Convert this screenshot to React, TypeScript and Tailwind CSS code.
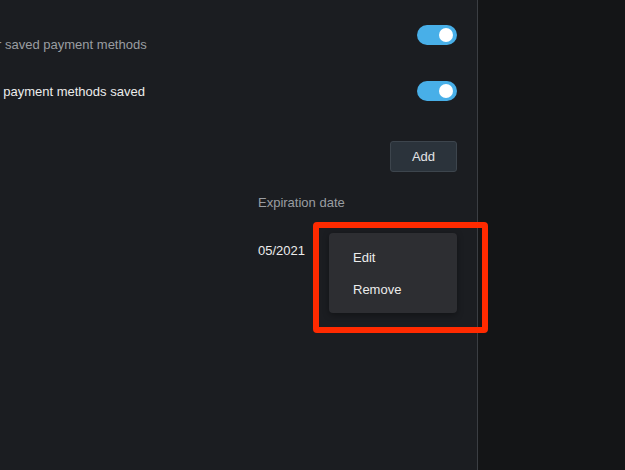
import React from "react";

function Toggle() {
  return (
    <div className="relative h-[20px] w-[40px] shrink-0 rounded-full bg-[#48afe8]">
      <div className="absolute right-[4px] top-[3px] h-[14px] w-[14px] rounded-full bg-white" />
    </div>
  );
}

export default function App() {
  return (
    <div
      className="flex h-[470px] w-[625px] overflow-hidden bg-[#141517] text-[13px] leading-[15px]"
      style={{ fontFamily: '"Liberation Sans", Arial, sans-serif' }}
    >
      <div className="relative flex w-[478px] shrink-0 flex-col border-r border-[#3b3e43] bg-[#1b1d21] pr-[20px] pt-[25px]">
        <div className="flex items-start justify-between">
          <span className="mt-[12px] ml-[-60px] whitespace-nowrap text-[#9a9da2]">
            Show your saved payment methods
          </span>
          <Toggle />
        </div>
        <div className="mt-[29px] flex items-center justify-between">
          <span className="ml-[-17px] whitespace-nowrap text-[#ececec]">
            No payment methods saved
          </span>
          <Toggle />
        </div>
        <div className="mt-[40px] flex justify-end">
          <button className="h-[31px] w-[67px] rounded-[3px] border border-[#3d454d] bg-[#2b333b] text-[13px] text-[#e2e4e6]">
            Add
          </button>
        </div>
        <div className="mt-[23px] pl-[258px] text-[#9a9da2]">Expiration date</div>
        <div className="mt-[33px] pl-[258px] text-[#ececec]">05/2021</div>

        <div className="absolute left-[329px] top-[233px] flex w-[128px] flex-col rounded-[4px] bg-[#2d2e32] py-[8px] shadow-[0_2px_6px_rgba(0,0,0,0.35)]">
          <div className="flex h-[32px] items-center pl-[24px] text-[#ececec]">Edit</div>
          <div className="flex h-[32px] items-center pl-[24px] text-[#ececec]">Remove</div>
        </div>

        <div className="pointer-events-none absolute left-[313px] top-[222px] z-10 h-[111px] w-[175px] rounded-[4px] border-[6px] border-[#ff2a00]" />
      </div>
      <div className="flex-1" />
    </div>
  );
}
